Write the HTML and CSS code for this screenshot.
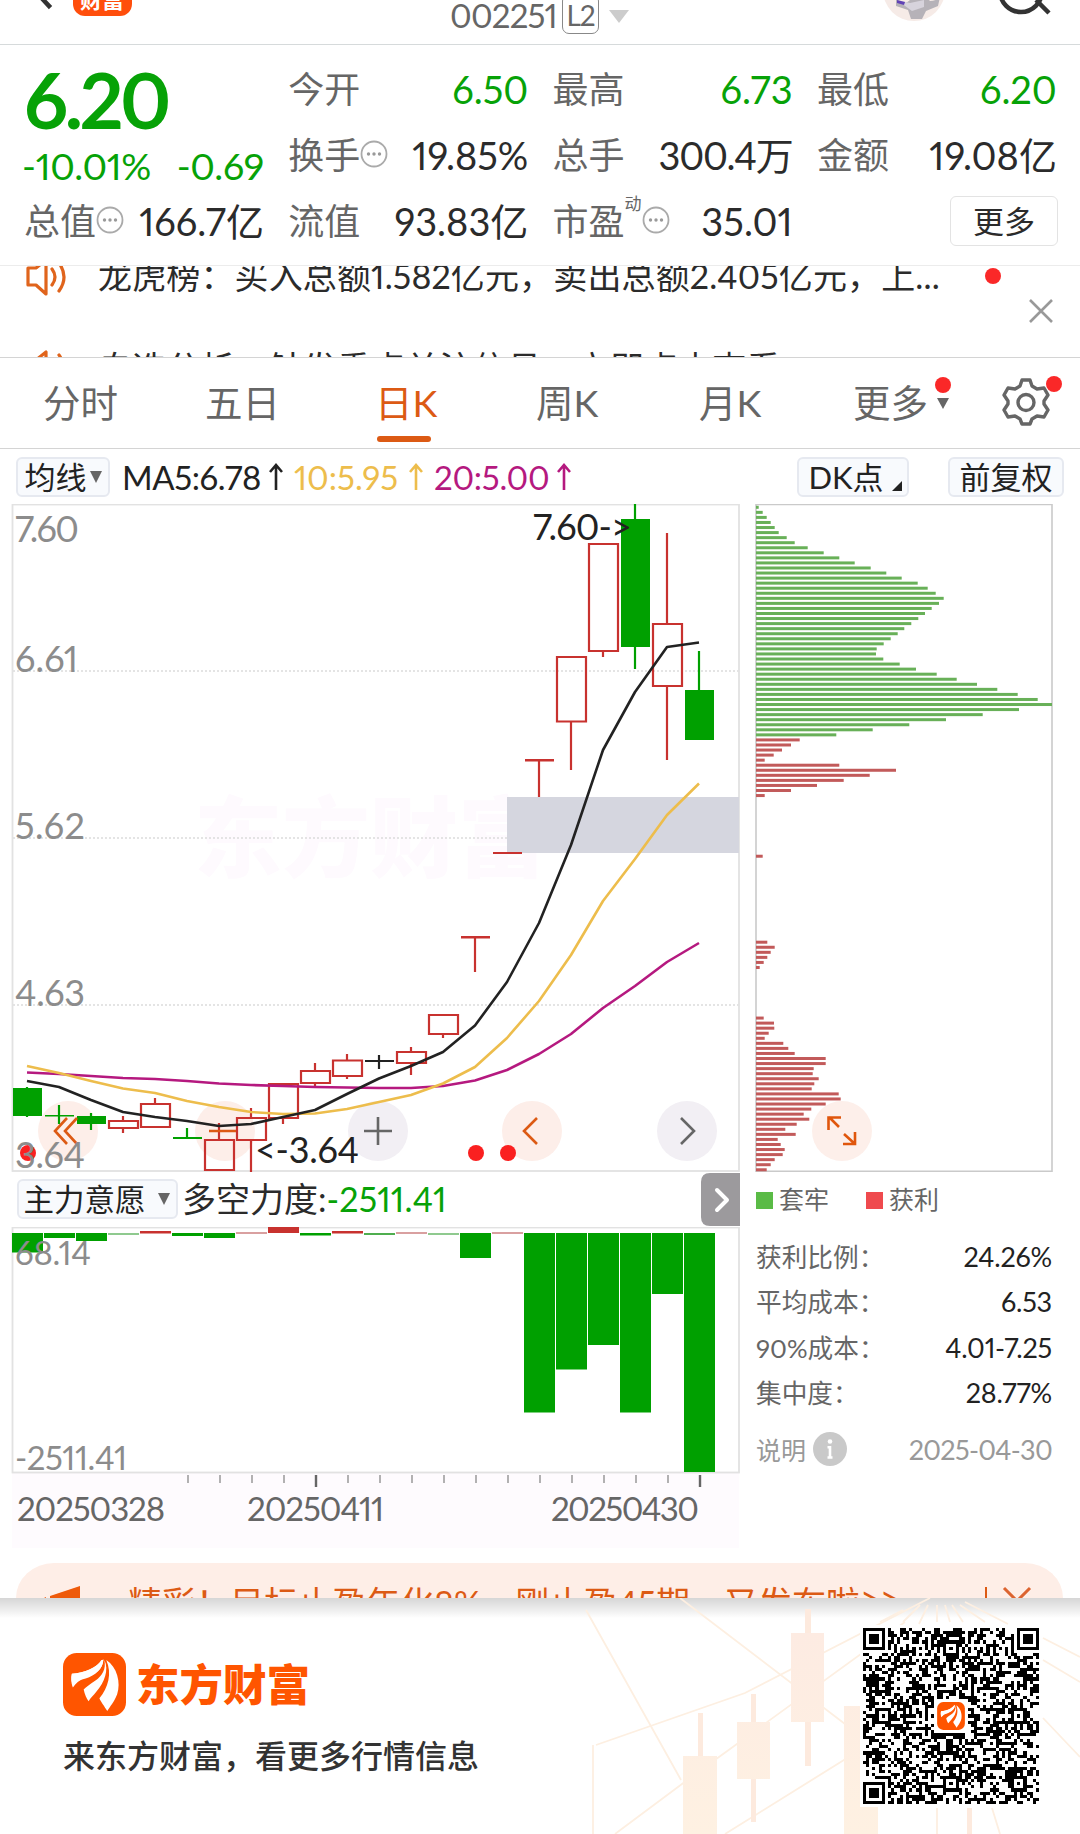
FILE: index.html
```html
<!DOCTYPE html>
<html lang="zh-CN">
<head>
<meta charset="utf-8">
<title>002251 行情</title>
<link rel="stylesheet" href="styles.css">
</head>
<body>
<svg width="0" height="0" class="defs">
  <symbol id="brand" viewBox="0 0 64 64">
    <rect width="64" height="64" rx="14" fill="#ff5500"/>
    <path d="M9 21C22 20 34 15 41 6C41 16 33 22 22 25C17 27 13 31 10 35C8 30 8 25 9 21Z" fill="#fff"/>
    <path d="M10 34C14 29 18 27 23 26C33 22 40 17 41 7L39 7C34 15 23 20 9 21C8 26 9 30 10 34Z" fill="#fff"/>
    <path d="M42 7C44 16 40 23 33 28C27 32 23 35 21 37C22 42 24 46 26 49C28 45 31 43 34 39C42 30 47 17 42 7Z" fill="#fff"/>
    <path d="M44 7C55 14 59 30 55 42C52 50 48 54 45 59C42 54 38 49 37 46C46 35 50 21 44 7Z" fill="#fff"/>
  </symbol>
  <symbol id="speaker" viewBox="0 0 46 40">
    <path d="M3 11h8l10-8v34l-10-9H3V11z M27 12q6 8 0 16 M34 6q10 14 0 28" fill="none" stroke="#e0641c" stroke-width="3.2" stroke-linejoin="round" stroke-linecap="round"/>
  </symbol>
  <symbol id="dots" viewBox="0 0 28 28">
    <circle cx="14" cy="14" r="12.5" fill="none" stroke="#aaa" stroke-width="1.8"/>
    <g fill="#999"><circle cx="8.5" cy="14" r="1.7"/><circle cx="14" cy="14" r="1.7"/><circle cx="19.5" cy="14" r="1.7"/></g>
  </symbol>
</svg>

<header class="topbar">
  <svg class="topbar-left" width="150" height="44" viewBox="0 0 150 44">
    <path d="M36-8L49 6" stroke="#333" stroke-width="4.5" stroke-linecap="square"/>
    <rect x="73" y="-30" width="59" height="46" rx="12" fill="#ff4e0c"/>
    <text x="80" y="8" font-size="22" font-weight="700" fill="#fff">财富</text>
  </svg>
  <div class="code"><span>002251</span><b>L2</b><i></i></div>
  <svg class="topbar-right" width="220" height="44" viewBox="0 0 220 44">
    <circle cx="54" cy="-10" r="31" fill="#f6ebe7"/>
    <path d="M36-4q6 12 14 4l4-5h10l6 6q6 0 10-4l-2 9-12 5-4 8h-11l-3-9-12-4z" fill="#b6b2b8"/>
    <path d="M37 0l13 3 14-3v7l-12 4z" fill="#d7d3dc"/><path d="M37 0l8 2-1 3-7-2z" fill="#6142b5"/>
    <circle cx="161" cy="-9" r="21" fill="none" stroke="#333" stroke-width="4.5"/>
    <path d="M176 0l13 13" stroke="#333" stroke-width="4.5"/>
  </svg>
</header>

<section class="quote">
  <div class="last">
    <div class="price">6.20</div>
    <div class="change"><span>-10.01%</span><span>-0.69</span></div>
  </div>
  <dl class="g"><dt>今开</dt><dd>6.50</dd></dl>
  <dl class="g"><dt>最高</dt><dd>6.73</dd></dl>
  <dl class="g"><dt>最低</dt><dd>6.20</dd></dl>
  <dl><dt>换手<svg><use href="#dots"/></svg></dt><dd>19.85%</dd></dl>
  <dl class="tight"><dt>总手</dt><dd>300.4万</dd></dl>
  <dl><dt>金额</dt><dd>19.08亿</dd></dl>
  <dl><dt>总值<svg><use href="#dots"/></svg></dt><dd>166.7亿</dd></dl>
  <dl><dt>流值</dt><dd>93.83亿</dd></dl>
  <dl><dt>市盈<sup>动</sup><svg><use href="#dots"/></svg></dt><dd>35.01</dd></dl>
  <div class="more"><button>更多</button></div>
</section>

<section class="notice">
  <div class="notice-list">
    <p><svg><use href="#speaker"/></svg><span>龙虎榜：买入总额1.582亿元，卖出总额2.405亿元，上...</span><i class="dot"></i></p>
    <p><svg><use href="#speaker"/></svg><span>自选分析：触发重点关注信号，立即点击查看</span></p>
  </div>
  <svg class="close" width="26" height="26" viewBox="0 0 26 26"><path d="M2 2l22 22M24 2L2 24" stroke="#999" stroke-width="2.6"/></svg>
</section>

<nav class="tabs">
  <a>分时</a><a>五日</a><a class="on">日K</a><a>周K</a><a>月K</a>
  <a class="drop">更多<i class="dot"></i></a>
  <span class="gear">
    <svg width="48" height="48" viewBox="0 0 48 48" fill="none" stroke="#666" stroke-width="3.4" stroke-linejoin="round">
      <path d="M20 2h8l2 6 5 3 7-1 4 7-4 6v3l4 6-4 7-7-1-5 3-2 5h-8l-2-5-5-3-7 1-4-7 4-6v-3l-4-6 4-7 7 1 5-3z"/>
      <circle cx="24" cy="24.500" r="8"/>
    </svg>
    <i class="dot"></i>
  </span>
</nav>

<section class="ma">
  <button class="pill">均线<i class="tri"></i></button>
  <span class="m5">MA5:6.78</span><svg class="up m5" viewBox="0 0 16 28"><path d="M8 27V2M2 9L8 2L14 9"/></svg>
  <span class="m10">10:5.95</span><svg class="up m10" viewBox="0 0 16 28"><path d="M8 27V2M2 9L8 2L14 9"/></svg>
  <span class="m20">20:5.00</span><svg class="up m20" viewBox="0 0 16 28"><path d="M8 27V2M2 9L8 2L14 9"/></svg>
  <button class="pill dk">DK点<i class="corner"></i></button>
  <button class="pill">前复权</button>
</section>

<main class="board">
  <div class="left">
    <svg id="kline" width="740" height="668" viewBox="0 504 740 668">
      <text x="194" y="870" font-size="88" font-weight="900" fill="#fefafe">东方财富</text>
      <g stroke="#dcdcdc" stroke-width="1.3" stroke-dasharray="2 2"><path d="M13 671H739M13 838H739M13 1005H739"/></g>
      <rect x="12.500" y="504.500" width="726.500" height="666.500" fill="none" stroke="#e2e2e2" stroke-width="1.8"/>
      <rect x="507" y="797" width="232" height="56" fill="#d5d6df"/>
      <g fill="#fdeee9"><circle cx="68" cy="1131" r="30"/><circle cx="225" cy="1131" r="30"/><circle cx="532" cy="1131" r="30"/></g>
      <g fill="#f2eff4"><circle cx="378" cy="1131" r="30"/><circle cx="687" cy="1131" r="30"/></g>
      <g id="candles"></g>
      <g fill="none" stroke-width="2.600" stroke-linejoin="round">
        <polyline id="ma20" stroke="#b5197f"/>
        <polyline id="ma10" stroke="#edbd4c"/>
        <polyline id="ma5" stroke="#222"/>
      </g>
      <g fill="#fa2020"><circle cx="28" cy="1153" r="8"/><circle cx="476" cy="1153" r="8"/><circle cx="508" cy="1153" r="8"/></g>
      <g fill="none" stroke="#dc5a14" stroke-width="2.600">
        <path d="M67 1118L55 1131L67 1144M77 1118L65 1131L77 1144M209 1131H236M537 1118L524 1131L537 1144"/>
      </g>
      <g fill="none" stroke="#666" stroke-width="2.600"><path d="M364 1131H392M378 1117V1145M681 1118L694 1131L681 1144"/></g>
      <g font-size="36" fill="#8c8c8c">
        <text x="15" y="542" textLength="64">7.60</text><text x="15" y="671.500" textLength="63">6.61</text>
        <text x="15" y="838.500" textLength="70">5.62</text><text x="15" y="1005.500" textLength="70">4.63</text><text x="15" y="1168" textLength="70">3.64</text>
      </g>
      <g font-size="36" fill="#222"><text x="533" y="540" textLength="99">7.60-&gt;</text><text x="255" y="1163" textLength="104">&lt;-3.64</text></g>
    </svg>
    <div class="subhead">
      <button class="pill">主力意愿<i class="tri"></i></button>
      <span>多空力度:</span><em>-2511.41</em>
      <svg class="expand" width="39" height="53" viewBox="0 0 39 53"><path d="M39 0V53H9Q0 53 0 44V9Q0 0 9 0Z" fill="#9c9a9d"/><path d="M16 17L26 27L16 37" fill="none" stroke="#fff" stroke-width="4" stroke-linecap="round" stroke-linejoin="round"/></svg>
    </div>
    <svg id="force" width="740" height="322" viewBox="0 1227 740 322">
      <rect x="12" y="1473" width="727" height="75" fill="#fefbfe"/>
      <rect x="12.500" y="1227.500" width="726.500" height="245" fill="none" stroke="#e2e2e2" stroke-width="1.8"/>
      <g id="bars"></g>
      <g id="ticks" stroke="#999"></g>
      <g font-size="33" fill="#8c8c8c"><text x="15" y="1265" textLength="76">68.14</text><text x="15" y="1470" textLength="112">-2511.41</text></g>
      <g font-size="33" fill="#666"><text x="17" y="1521" textLength="148">20250328</text><text x="247" y="1521" textLength="137">20250411</text><text x="551" y="1521" textLength="148">20250430</text></g>
    </svg>
  </div>
  <aside class="chips">
    <svg width="310" height="668" viewBox="754 504 310 668">
      <path d="M756 504.500H1052V1171.300H756Z" fill="none" stroke="#cacaca" stroke-width="1.600"/>
      <g id="chipbars"></g>
      <circle cx="842" cy="1131" r="30" fill="#fdeee9" fill-opacity=".96"/>
      <path d="M839 1127L829 1117M828.500 1130V1117.500H841M844 1134L855 1144M843 1144H855V1132" fill="none" stroke="#e0560c" stroke-width="2.600"/>
    </svg>
    <div class="legend"><i class="lg"></i><span>套牢</span><i class="lr"></i><span>获利</span></div>
    <dl class="cost">
      <dt>获利比例：</dt><dd>24.26%</dd>
      <dt>平均成本：</dt><dd>6.53</dd>
      <dt>90%成本：</dt><dd>4.01-7.25</dd>
      <dt>集中度：</dt><dd>28.77%</dd>
    </dl>
    <div class="explain"><span>说明</span><svg width="34" height="34" viewBox="0 0 34 34"><circle cx="17" cy="17" r="17" fill="#c9c9c9"/><circle cx="17" cy="9.500" r="2.300" fill="#fff"/><path d="M17 14v12M14.500 15.200h3M14.500 25.500h5" fill="none" stroke="#fff" stroke-width="2.600"/></svg><time>2025-04-30</time></div>
  </aside>
</main>

<section class="promo">
  <svg class="horn" width="44" height="40" viewBox="0 0 44 40"><path d="M0 13l4-2v29H0zM8 10L38 0V40H8z" fill="#ee5a0a"/></svg>
  <span class="promo-text">精彩！目标止盈年化8%，刚止盈45期，又发布啦<b>&gt;&gt;</b></span>
  <i></i>
  <svg class="x" width="30" height="30" viewBox="0 0 30 30"><path d="M2 2l26 26M28 2L2 28" stroke="#dc6430" stroke-width="3"/></svg>
</section>

<footer class="share">
  <svg class="deco" width="540" height="236" viewBox="540 1598 540 236">
    <g fill="none" stroke="#fdefe1" stroke-width="1.800">
      <path d="M586 1610L681 1780M680 1598L900 1766M596 1745L745 1693L930 1598M615 1834L690 1778L905 1622M725 1834L860 1750M593 1745V1834"/>
      <path d="M903 1610L880 1622M920 1605L903 1622M928 1605L919 1624M937 1605V1622M945 1605L950 1622M952 1605L963 1622M960 1605L985 1622M965 1602L1008 1624M1043 1638L1080 1657M1043 1660L1080 1682M1043 1718L1080 1757M937 1808V1834M992 1808L1000 1834"/>
    </g>
    <g fill="#fdeade"><path d="M698 1713h5v43h-5zM751 1694h5v128h-5zM805 1609h6v157h-6zM967 1808h5v26h-5z"/></g>
    <linearGradient id="fade" x2="0" y2="1"><stop stop-color="#fdebe2"/><stop offset="1" stop-color="#fef1e2"/></linearGradient>
    <g fill="url(#fade)"><path d="M683 1756h34v78h-34zM737 1722h33v57h-33zM791 1633h33v89h-33zM844 1706h34v128h-34z"/></g>
  </svg>
  <div class="brand">
    <div class="name"><svg width="63" height="63"><use href="#brand"/></svg><strong>东方财富</strong></div>
    <p>来东方财富，看更多行情信息</p>
  </div>
  <svg id="qr" width="182" height="182" viewBox="-1 -1 59 59" shape-rendering="crispEdges">
    <rect x="-1" y="-1" width="59" height="59" fill="#fff"/>
    <path id="qrpath" fill="#000"/>
    <rect x="23" y="23" width="11" height="11" fill="#fff"/>
    <use href="#brand" x="24" y="24" width="9" height="9" shape-rendering="auto"/>
  </svg>
</footer>
<script src="app.js"></script>
</body>
</html>
```
FILE: styles.css
```css
* { box-sizing: border-box; margin: 0; padding: 0; }
body {
  width: 1080px; height: 1834px; overflow: hidden; background: #fff; color: #2b2b2b;
  font-family: Lato, "Noto Sans CJK SC", sans-serif; font-variant-numeric: proportional-nums;
}
i { display: block; font-style: normal; }
button { font: inherit; color: inherit; }
svg { display: block; flex: none; overflow: hidden; }
.defs { position: absolute; }
.dot { width: 16px; height: 16px; border-radius: 50%; background: #fa2828; }

.topbar { display: flex; height: 45px; border-bottom: 1.5px solid #d6dadb; overflow: hidden; }
.code { display: flex; align-items: flex-start; width: 710px; padding-left: 300px; color: #666; font-size: 33px; line-height: 31px; }
.code span { width: 112px; letter-spacing: -.8px; }
.code b { width: 37px; height: 40px; margin-top: -6px; padding-top: 5px; border: 1.8px solid #888; border-radius: 7px; font-size: 28px; font-weight: 400; letter-spacing: -1px; text-align: center; }
.code i { margin: 10px 0 0 10px; border: 10px solid transparent; border-top: 13px solid #ccc; border-bottom: 0; }

.quote { display: grid; grid-template-columns: repeat(4, 240px); grid-template-rows: repeat(3, 66px); column-gap: 24.300px; height: 221px; padding: 11px 0 0 24px; border-bottom: 1.500px solid #ececec; font-size: 38px; }
.last { grid-row: span 2; color: #07a207; }
.price { height: 84px; font-size: 77px; line-height: 86px; font-weight: 700; letter-spacing: -3.500px; }
.change { display: flex; justify-content: space-between; margin-left: -2px; line-height: 52px; font-size: 37.500px; letter-spacing: -.300px; }
.quote dl { display: flex; justify-content: space-between; line-height: 66px; white-space: nowrap; }
.quote dt { display: flex; align-items: center; color: #666; font-size: 36px; }
.quote dt svg { width: 28px; height: 28px; margin-top: -2px; }
.quote dt sup { align-self: flex-start; width: 17px; font-size: 17px; line-height: 32px; }
.quote .g dd { color: #07a207; }
.quote dd { letter-spacing: 0; }
.quote .tight dd { letter-spacing: -1.200px; }
.more { display: flex; justify-content: flex-end; align-items: center; margin-right: -1px; }
.more button { width: 108px; height: 50px; border: 1.500px solid #e3e3e3; border-radius: 6px; background: #fff; font-size: 31px; line-height: 44px; }

.notice { display: flex; justify-content: space-between; height: 92px; border-bottom: 1.500px solid #d4d4d4; overflow: hidden; }
.notice-list { flex: 1; margin-top: -15px; }
.notice p { display: flex; align-items: flex-start; height: 92px; padding-left: 25px; font-size: 34px; line-height: 50px; white-space: nowrap; }
.notice p span { letter-spacing: .130px; }
.notice p svg { width: 46px; height: 40px; margin: 6px 27px 0 0; }
.notice p .dot { margin: 17px 0 0 45px; }
.close { margin: 32px 26px 0 0; }

.tabs { display: flex; height: 91px; border-bottom: 1.500px solid #d4d4d4; font-size: 37.500px; line-height: 90px; color: #666; padding-left: 43px; }
.tabs a { width: 162px; position: relative; }
.tabs .on { color: #dc5a14; }
.tabs a:nth-child(2) { width: 170px; }
.tabs a:nth-child(3) { width: 161px; }
.tabs a:nth-child(4) { width: 163px; }
.tabs a:nth-child(5) { width: 154px; }
.tabs .on::after { content: ""; position: absolute; left: 2px; bottom: 6px; width: 54px; height: 6px; border-radius: 3px; background: #dc5a14; }
.tabs .drop { width: 150px; }
.tabs .drop .dot { position: absolute; left: 82px; top: 19px; }
.tabs .drop::after { content: ""; position: absolute; left: 84px; top: 40px; border: 6px solid transparent; border-top: 11px solid #666; border-bottom: 0; }
.gear { position: relative; width: 48px; padding-top: 20px; margin-left: -1px; }
.gear .dot { position: absolute; right: -12px; top: 18px; }

.pill { display: flex; align-items: center; justify-content: center; height: 40px; border: 2px solid #e6e9f0; border-radius: 6px; background: #f8fafd; color: #222; font-size: 31px; line-height: 34px; white-space: nowrap; }
.tri { border: 6.500px solid transparent; border-top: 12px solid #666; border-bottom: 0; margin-left: 3px; }
.ma { display: flex; align-items: center; height: 55px; padding: 0 16px; font-size: 33px; line-height: 40px; white-space: nowrap; }
.ma .pill:first-child { width: 94px; margin-right: 12px; }
.ma .dk { width: 112px; margin: 0 39px 0 auto; }
.ma .pill:last-child { width: 116px; margin-right: 0; }
.corner { width: 0; border-left: 10px solid transparent; border-bottom: 10px solid #222; margin: 18px -4px 0 8px; }
.up { width: 16px; height: 28px; margin: 0 10px 0 9px; fill: none; stroke: currentColor; stroke-width: 2.600; }
.m5 { color: #222; } .m10 { color: #edbd4c; } .m20 { color: #b5197f; }
span.m5 { width: 137px; letter-spacing: -.400px; } span.m10 { width: 105px; } span.m20 { width: 113px; letter-spacing: -.300px; }

.board { display: flex; height: 1059px; }
.left { width: 740px; }
.chips { width: 340px; padding-left: 14px; }
.subhead { display: flex; align-items: center; height: 55px; padding-left: 17px; font-size: 34px; line-height: 50px; white-space: nowrap; }
.subhead span, .subhead em { margin-top: -2px; }
.subhead .pill { width: 161px; margin: -2px 4px 0 0; padding-right: 2px; font-size: 30.500px; }
.subhead .tri { margin-left: 12px; }
.subhead em { font-style: normal; color: #07a207; letter-spacing: .200px; }
.subhead .expand { margin-left: auto; }
.legend { display: flex; align-items: center; height: 56px; padding-left: 2px; font-size: 25px; line-height: 52px; color: #666; }
.legend i { width: 17px; height: 17px; margin-right: 6px; }
.legend span { width: 87px; margin-top: -2px; }
.lg { background: #5abb46; } .lr { background: #ef4a4e; }
.cost { display: grid; grid-template-columns: 140px 156px; grid-auto-rows: 45.300px; padding: 7px 0 0 2px; line-height: 44px; color: #666; font-size: 25.700px; white-space: nowrap; }
.cost dd { text-align: right; color: #222; font-size: 27px; letter-spacing: -.200px; }
.explain { display: flex; align-items: center; width: 298px; height: 50px; margin-top: 8px; padding-left: 2px; font-size: 25px; color: #999; }
.explain svg { margin-left: 7px; }
.explain time { margin-left: auto; font-size: 27px; letter-spacing: -.700px; }

.promo { display: flex; height: 35px; margin: 0 17px 0 16px; padding-left: 26px; border-radius: 38px 38px 0 0 / 35px 35px 0 0; background: #feeee7; color: #dc5a14; font-size: 34px; line-height: 48px; white-space: nowrap; overflow: hidden; }
.horn { margin-top: 23px; }
.promo-text { width: 857px; padding: 16px 0 0 42px; }
.promo-text b { position: relative; top: -5px; font-weight: 400; }
.promo i { width: 1.800px; height: 30px; margin: 24px 15px 0 42px; background: #dc5a14; }
.promo .x { margin-top: 23px; }

.share { position: relative; display: flex; justify-content: space-between; height: 236px; padding: 27px 38px 0 63px; background: linear-gradient(#d6d6d6, #f2f2f2 14px, #fff 20px); }
.deco { position: absolute; right: 0; top: 0; }
#qr { position: relative; }
.brand { padding-top: 28px; }
.name { display: flex; align-items: center; gap: 10px; }
.name strong { color: #ff5500; font-size: 43.500px; line-height: 63px; font-weight: 900; }
.brand p { margin-top: 14px; font-size: 32px; line-height: 52px; font-weight: 500; color: #333; }
```
FILE: app.js
```js
const RED = '#c8322f', GREEN = '#00a000';
const put = (id, html) => { document.getElementById(id).innerHTML = html; };
const center = i => 27 + i * 32;

// [kind, body top, body bottom, wick top, wick bottom]
const candles = [
  ['g',1088,1116,1087,1117], ['g',1115,1116.5,1105,1124], ['g',1116,1124,1113,1130], ['r',1121,1128,1116,1133],
  ['r',1104,1127,1098,1128], ['g',1137,1139,1128,1139], ['r',1140,1170,1123,1170], ['r',1118,1140,1108,1172],
  ['r',1084,1118,1084,1124], ['r',1071,1083,1063,1086], ['r',1060.5,1076,1054,1079], ['k',1060,1062,1055,1069],
  ['r',1052,1063,1047,1075], ['r',1015,1034,1014,1038], ['t',936,938.5,937,972], ['t',852,854,853,853],
  ['t',759,761.5,760,797], ['r',657,721.5,657,770], ['r',544,651,544,657], ['g',519,647,504,669],
  ['r',624,686,533,760], ['g',690,740,651,740]
];
put('candles', candles.map(([k, t, b, wt, wb], i) => {
  const x = center(i), c = k === 'g' ? GREEN : k === 'k' ? '#222' : RED;
  if (k === 'r') {
    return `<path d="M${x} ${wt}V${t}M${x} ${b}V${wb}M${x - 14} ${t}H${x + 15}V${b}H${x - 14}Z" fill="none" stroke="${c}" stroke-width="2.2"/>`;
  }
  return `<path d="M${x} ${wt}V${wb}" stroke="${c}" stroke-width="2.2"/><rect x="${x - 14}" y="${t}" width="29" height="${b - t}" fill="${c}"/>`;
}).join(''));

const lines = {
  ma5: [1081,1087,1100,1112,1117,1121,1126,1124,1117,1110,1094,1078.5,1066,1052,1025.5,982,923,845,750,692,647,642.5],
  ma10: [1066,1073,1081,1088.5,1093,1101,1107,1112,1114,1113.5,1109,1102,1095,1083.5,1067,1038,1001,955,901,859,815,783.5],
  ma20: [1072.5,1074,1076,1078,1079,1081,1083.5,1085,1086,1087,1087.5,1088,1088,1086,1080.5,1070,1054,1034,1008,986,962,943]
};
for (const id in lines) {
  document.getElementById(id).setAttribute('points', lines[id].map((y, i) => center(i) + ',' + y).join(' '));
}

// [top, bottom, colour]
const force = [
  [1233,1252.5,GREEN],[1233,1238,GREEN],[1233,1241,GREEN],[1233,1235,'#8fca8f'],[1231,1233.5,RED],[1233,1236,GREEN],
  [1233,1238,GREEN],[1232,1234,'#d9a0a0'],[1227,1233,RED],[1233,1235.5,GREEN],[1231,1233.5,RED],[1233,1235,'#4fae4f'],
  [1232,1234,'#d9a0a0'],[1233,1235,'#8fca8f'],[1233,1258,GREEN],[1232,1234,'#d9a0a0'],[1233,1412.5,GREEN],
  [1233,1369.5,GREEN],[1233,1345,GREEN],[1233,1412.5,GREEN],[1233,1294,GREEN],[1233,1472,GREEN]
];
put('bars', force.map(([t, b, c], i) => `<rect x="${center(i) - 15}" y="${t}" width="31" height="${b - t}" fill="${c}"/>`).join(''));

let ticks = '';
for (let x = 188; x <= 700; x += 32) {
  const major = x === 316 || x === 700;
  ticks += `<path d="M${x} 1475V${major ? 1487 : 1483}" ${major ? 'stroke="#666" stroke-width="2.4"' : 'stroke-width="1.5"'}/>`;
}
put('ticks', ticks);

// Chip distribution: bar lengths in thirds of a pixel, keyed by the first price level of each run.
const runs = [
  [0, '#68b058', [8,20,32,44,56,68,92,116,155,203,250,296,344,391,437,485,515,539,563,549,527,507,487,466,445,425,404,383,362,360,382,431,480,542,602,663,724,785,845,888,789,680,570,460,350,241]],
  [46, '#c25a5a', [131,105,78,53,26,250,420,341,263,183,105,26]],
  [69, '#c25a5a', [20]],
  [86, '#c25a5a', [34,56,44,34,23,11]],
  [101, '#c25a5a', [23,54,55,38,26,82,97,116,209,209,173,170,188,175,167,248,254,209,166,143,160,122,88,119,65,74,86,80,56,44,32]]
];
put('chipbars', runs.map(([start, color, list]) => list.map((w, i) =>
  `<rect x="756" y="${(505.8 + (start + i) * 5.057).toFixed(2)}" width="${(w / 3).toFixed(1)}" height="3" fill="${color}"/>`).join('')).join(''));

// 57-module code: finders, timing, alignment marks, then the data area.
const N = 57;
let seed = 20250430, d = '';
const rnd = () => (seed = (seed * 48271) % 2147483647) / 2147483647;
const finder = (x, y, fx, fy) => {
  const r = Math.max(Math.abs(x - fx - 3), Math.abs(y - fy - 3));
  return r > 4 ? null : r !== 2 && r !== 4;
};
const align = (x, y, cx, cy) => {
  const r = Math.max(Math.abs(x - cx), Math.abs(y - cy));
  return r > 2 ? null : r !== 1;
};
for (let y = 0; y < N; y++) for (let x = 0; x < N; x++) {
  let on = finder(x, y, 0, 0) ?? finder(x, y, N - 7, 0) ?? finder(x, y, 0, N - 7);
  for (const [cx, cy] of [[28,6],[6,28],[50,28],[28,50],[50,50]]) on = on ?? align(x, y, cx, cy);
  if (on === null && (x === 6 || y === 6)) on = (x + y) % 2 === 0;
  if (on ?? rnd() < 0.5) d += `M${x} ${y}h1v1h-1z`;
}
document.getElementById('qrpath').setAttribute('d', d);
```
